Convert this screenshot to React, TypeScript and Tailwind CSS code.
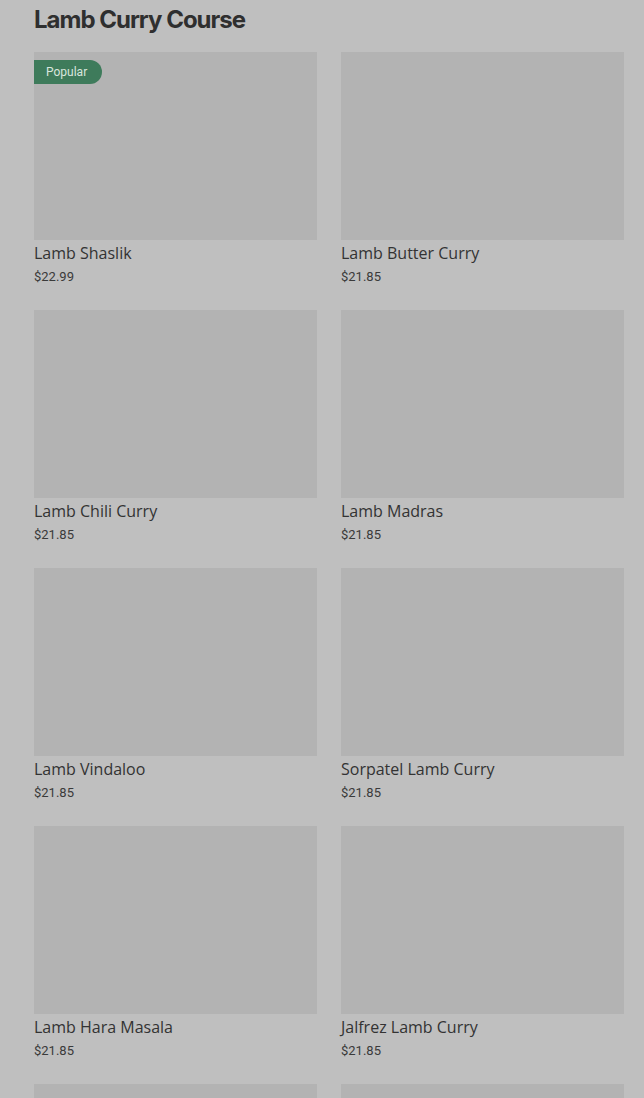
const ITEMS = [
  { name: 'Lamb Shaslik', price: '$22.99', popular: true },
  { name: 'Lamb Butter Curry', price: '$21.85' },
  { name: 'Lamb Chili Curry', price: '$21.85' },
  { name: 'Lamb Madras', price: '$21.85' },
  { name: 'Lamb Vindaloo', price: '$21.85' },
  { name: 'Sorpatel Lamb Curry', price: '$21.85' },
  { name: 'Lamb Hara Masala', price: '$21.85' },
  { name: 'Jalfrez Lamb Curry', price: '$21.85' },
];

export default function App() {
  return (
    <div className="bg-[#bfbfbf] pl-[34px] pr-[20px] pt-[4px] overflow-hidden h-[1098px]">
      <h2
        className="text-[24px] leading-[32px] font-bold tracking-[-1px] text-[#2f2f2f]"
        style={{ fontFamily: 'Inter, "Liberation Sans", sans-serif' }}
      >
        Lamb Curry Course
      </h2>

      <div className="grid grid-cols-2 gap-x-[24px] gap-y-[24px] mt-[16px]">
        {ITEMS.map(item => (
          <div key={item.name}>
            <div className="relative h-[188px] bg-[#b3b3b3]">
              {item.popular && (
                <span
                  className="absolute left-0 top-[8px] h-[24px] pl-[12px] pr-[15px] rounded-r-full bg-[#3e7b5b] text-[12px] leading-[24px] text-[#d9e6de]"
                  style={{ fontFamily: 'Roboto, "Liberation Sans", sans-serif' }}
                >
                  Popular
                </span>
              )}
            </div>
            <p
              className="mt-[3px] text-[16px] leading-[20px] font-medium text-[#333333]"
              style={{ fontFamily: '"Open Sans", "Liberation Sans", sans-serif' }}
            >
              {item.name}
            </p>
            <p
              className="mt-[3px] pt-[1px] text-[13px] leading-[19px] text-[#3a3a3a]"
              style={{ fontFamily: 'Roboto, "Liberation Sans", sans-serif' }}
            >
              {item.price}
            </p>
          </div>
        ))}
        {/* next row, only the tops of the pictures show */}
        <div className="h-[188px] bg-[#b3b3b3]" />
        <div className="h-[188px] bg-[#b3b3b3]" />
      </div>
    </div>
  );
}
